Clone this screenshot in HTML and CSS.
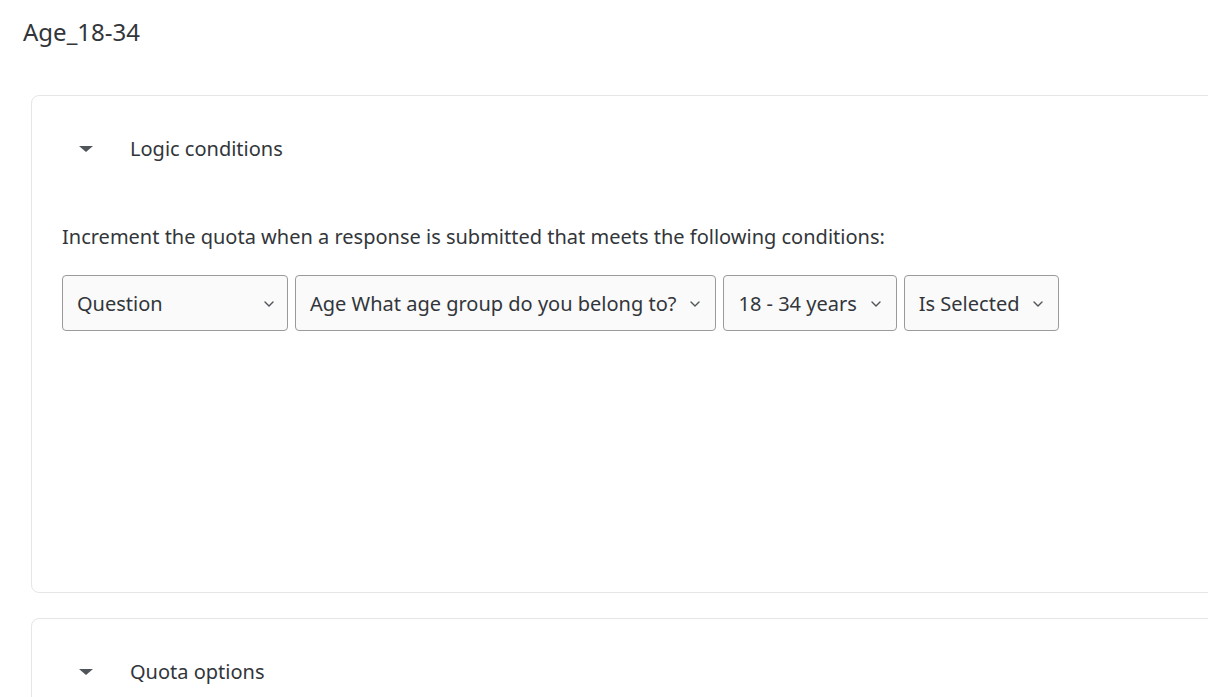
FILE: index.html
```html
<!DOCTYPE html>
<html>
<head>
<meta charset="utf-8">
<link rel="stylesheet" href="styles.css">
</head>
<body>
<div class="page">
  <h1 class="title">Age_18-34</h1>
  <div class="cards">
    <section class="card card-logic">
      <div class="card-head">
        <span class="caret"></span>
        <span class="card-title">Logic conditions</span>
      </div>
      <p class="desc">Increment the quota when a response is submitted that meets the following conditions:</p>
      <div class="conditions">
        <div class="select sel-type"><span>Question</span><svg class="chev" viewBox="0 0 10 6"><polyline points="1,1 5,5 9,1"/></svg></div>
        <div class="select"><span>Age What age group do you belong to?</span><svg class="chev" viewBox="0 0 10 6"><polyline points="1,1 5,5 9,1"/></svg></div>
        <div class="select"><span>18 - 34 years</span><svg class="chev" viewBox="0 0 10 6"><polyline points="1,1 5,5 9,1"/></svg></div>
        <div class="select"><span>Is Selected</span><svg class="chev" viewBox="0 0 10 6"><polyline points="1,1 5,5 9,1"/></svg></div>
      </div>
    </section>
    <section class="card card-options">
      <div class="card-head">
        <span class="caret"></span>
        <span class="card-title">Quota options</span>
      </div>
    </section>
  </div>
</div>
</body>
</html>
```
FILE: styles.css
```css
html, body {
  margin: 0;
  padding: 0;
  background: #ffffff;
}
body {
  font-family: "Noto Sans", "Open Sans", sans-serif;
  color: #32363a;
  overflow: hidden;
}
.page {
  width: 1208px;
  height: 697px;
  overflow: hidden;
  padding: 0 0 0 22px;
  box-sizing: border-box;
}
.title {
  margin: 0 0 0 1px;
  padding-top: 16px;
  font-size: 24px;
  font-weight: 400;
  line-height: 32px;
  color: #32363a;
}
.cards {
  margin-top: 47px;
  margin-left: 9px;
  width: 1220px;
}
.card {
  border: 1px solid #e6e6e6;
  border-radius: 8px;
  box-sizing: border-box;
}
.card-logic {
  height: 498px;
  padding: 0 0 0 30px;
}
.card-options {
  margin-top: 25px;
  height: 200px;
  padding: 0 0 0 30px;
}
.card-head {
  display: flex;
  align-items: center;
  height: 28px;
  margin-top: 38px;
}
.caret {
  width: 0;
  height: 0;
  border-left: 7px solid transparent;
  border-right: 7px solid transparent;
  border-top: 6px solid #505559;
  margin-left: 17px;
  margin-top: 2px;
}
.card-title {
  margin-left: 37px;
  font-size: 20px;
  color: #32363a;
}
.desc {
  margin: 61px 0 0 0;
  font-size: 20px;
  line-height: 28px;
  color: #32363a;
}
.conditions {
  display: flex;
  gap: 7px;
  margin-top: 24px;
}
.select {
  display: flex;
  align-items: center;
  height: 56px;
  box-sizing: border-box;
  border: 1px solid #9a9a9a;
  border-radius: 4px;
  background: #fafafa;
  padding: 0 15px 0 14px;
  font-size: 20px;
  color: #32363a;
  white-space: nowrap;
}
.sel-type {
  width: 226px;
  justify-content: space-between;
  padding-right: 13px;
}
.chev {
  width: 10px;
  height: 6px;
  margin-left: 14px;
  margin-top: 1px;
  fill: none;
  stroke: #505559;
  stroke-width: 1.4;
  stroke-linecap: round;
  stroke-linejoin: round;
}
```
